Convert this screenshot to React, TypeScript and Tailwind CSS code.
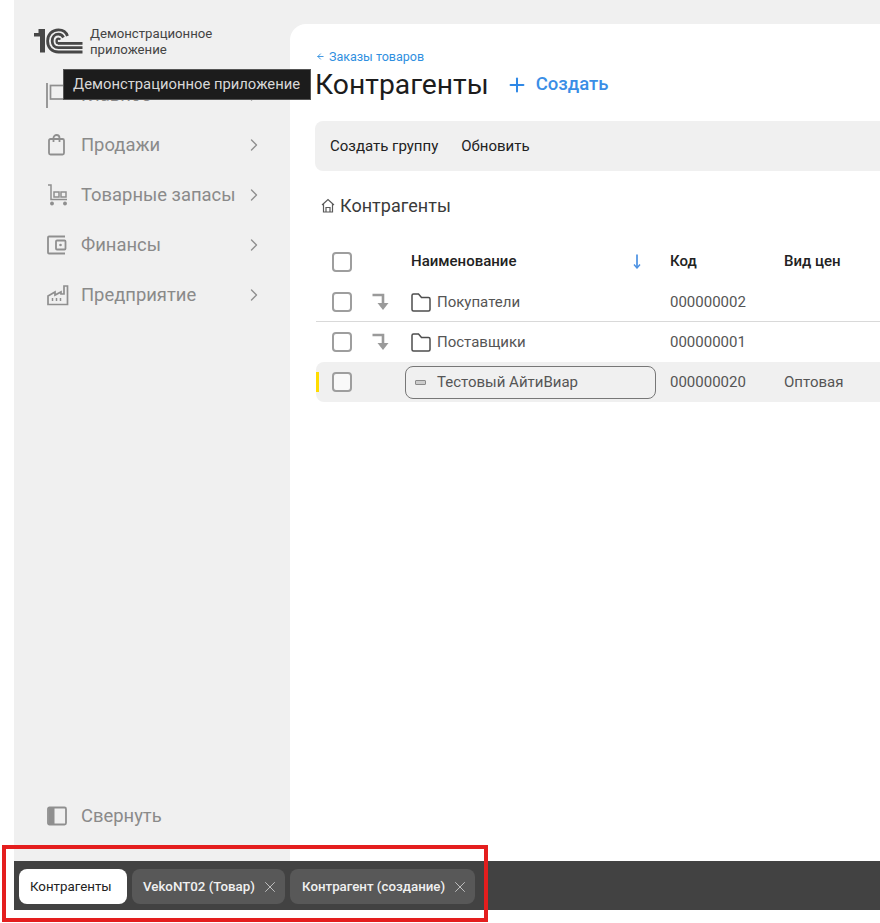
import React from "react";
import { ChevronRight, X, Plus, ArrowLeft } from "lucide-react";

function Logo() {
  return (
    <svg width="49" height="26" viewBox="0 0 49 26" fill="none" className="shrink-0">
      <path d="M0 5 L4.5 5 L4.5 1 L11 1 L11 24.5 L6 24.5 L6 8.5 L0 8.5 Z" fill="#474747" />
      <path d="M33.5 8 C32 3.5 28 1.8 24.5 1.8 C18 1.8 13.6 6.5 13.6 13 C13.6 19.8 18 24 24.5 24 L48.5 24" stroke="#474747" strokeWidth="2.8" />
      <path d="M29.5 9.5 C28.5 7.5 26.5 6.2 24.5 6.2 C20.6 6.2 18.2 9.2 18.2 13 C18.2 16.8 20.6 19.7 24.5 19.7 L48.5 19.7" stroke="#474747" strokeWidth="2.8" />
      <path d="M24 15.4 L48.5 15.4" stroke="#474747" strokeWidth="2.8" />
      <path d="M24.5 15.4 C23.4 15.4 22.6 14.4 22.6 13 C22.6 11.6 23.4 10.6 24.5 10.6 C25.2 10.6 25.8 11 26.2 11.6" stroke="#474747" strokeWidth="2.4" />
    </svg>
  );
}

function HomeIcon() {
  return (
    <svg width="20" height="24" viewBox="0 0 20 24" fill="none" stroke="#8f8f8f" strokeWidth="1.7">
      <rect x="3.5" y="2.5" width="15" height="13.5" />
    </svg>
  );
}
function BagIcon() {
  return (
    <svg width="20" height="22" viewBox="0 0 20 22" fill="none" stroke="#8f8f8f" strokeWidth="1.8">
      <rect x="2" y="5" width="15" height="15.5" rx="1.5" />
      <path d="M6.5 8 V4 C6.5 2.2 8 1 9.5 1 C11 1 12.5 2.2 12.5 4 V8" />
    </svg>
  );
}
function CartIcon() {
  return (
    <svg width="22" height="22" viewBox="0 0 22 22" fill="none" stroke="#8f8f8f" strokeWidth="1.5">
      <path d="M1 1 H4 V15.5 H20" />
      <rect x="7" y="8" width="5" height="5" />
      <rect x="14" y="8" width="5" height="5" />
      <circle cx="5" cy="19.5" r="1.2" fill="#8f8f8f" />
      <circle cx="18" cy="19.5" r="1.2" fill="#8f8f8f" />
    </svg>
  );
}
function WalletIcon() {
  return (
    <svg width="20" height="20" viewBox="0 0 20 20" fill="none" stroke="#8f8f8f" strokeWidth="1.8">
      <path d="M18 1.5 H2 C1.4 1.5 1 2 1 2.5 V17.5 C1 18 1.4 18.5 2 18.5 H18" />
      <rect x="9" y="5.5" width="9.5" height="9" rx="1" />
      <circle cx="13.5" cy="10" r="1.3" fill="#8f8f8f" stroke="none" />
    </svg>
  );
}
function FactoryIcon() {
  return (
    <svg width="22" height="22" viewBox="0 0 22 22" fill="none" stroke="#8f8f8f" strokeWidth="1.7">
      <path d="M1 20.5 V12 L8 8 V11 L14 8 V10 H17 V2 H20.5 V20.5 Z" />
      <path d="M5.5 14 V17 M9.5 14 V17 M13.5 14 V17" strokeWidth="1.5" />
    </svg>
  );
}
function PanelIcon() {
  return (
    <svg width="20" height="20" viewBox="0 0 20 20" fill="none">
      <rect x="1" y="1.5" width="18" height="17" rx="1.5" stroke="#8f8f8f" strokeWidth="1.8" />
      <path d="M1.5 2 H7.5 V18 H1.5 Z" fill="#8f8f8f" />
    </svg>
  );
}
function HouseSmall() {
  return (
    <svg width="14" height="15" viewBox="0 0 14 15" fill="none" stroke="#5a5a5a" strokeWidth="1.2">
      <path d="M1 7 L7 1.5 L13 7" />
      <path d="M2.5 6 V14 H11.5 V6" />
      <path d="M5 14 V9.5 H9 V14" />
    </svg>
  );
}
function Folder() {
  return (
    <svg width="20" height="19" viewBox="0 0 20 19" fill="none" stroke="#4d4d4d" strokeWidth="1.5" className="shrink-0">
      <path d="M1 2.5 C1 1.5 1.5 1 2.5 1 H7.5 L10.5 4.5 H17.5 C18.5 4.5 19 5 19 6 V16.5 C19 17.5 18.5 18 17.5 18 H2.5 C1.5 18 1 17.5 1 16.5 Z" />
    </svg>
  );
}
function TurnArrow() {
  return (
    <svg width="18" height="18" viewBox="0 0 18 18" fill="none" className="shrink-0">
      <path d="M0.5 2 H11 V11" stroke="#9a9a9a" strokeWidth="2.6" />
      <path d="M5.5 10 H16.5 L11 17 Z" fill="#9a9a9a" />
    </svg>
  );
}
function SortArrow() {
  return (
    <svg width="10" height="15" viewBox="0 0 10 15" fill="none" className="shrink-0">
      <path d="M5 0.5 V13" stroke="#4a90e2" strokeWidth="1.7" />
      <path d="M2 10.5 L5 14 L8 10.5" stroke="#4a90e2" strokeWidth="1.4" />
    </svg>
  );
}
function Check() {
  return <div className="w-5 h-5 shrink-0 rounded-[4px] border-2 border-[#9e9e9e] bg-white/60" />;
}

const nav = [
  { label: "Главное", icon: <HomeIcon /> },
  { label: "Продажи", icon: <BagIcon /> },
  { label: "Товарные запасы", icon: <CartIcon /> },
  { label: "Финансы", icon: <WalletIcon /> },
  { label: "Предприятие", icon: <FactoryIcon /> },
];

function Row({ cb, arrow, name, code, price, className = "h-10" }: { cb?: React.ReactNode; arrow?: React.ReactNode; name: React.ReactNode; code: React.ReactNode; price?: React.ReactNode; className?: string }) {
  return (
    <div className={`flex items-center pl-4 ${className}`}>
      <div className="w-10 shrink-0">{cb}</div>
      <div className="w-[33px] shrink-0">{arrow}</div>
      <div className="w-[265px] shrink-0 pr-[14px]">{name}</div>
      <div className="w-[114px] shrink-0">{code}</div>
      <div>{price}</div>
    </div>
  );
}

export default function App() {
  return (
    <div className="relative w-[880px] h-[923px] overflow-hidden bg-white pl-[14px] pb-[13px] flex flex-col" style={{ fontFamily: 'Roboto, "Noto Sans", sans-serif' }}>
      <div className="flex flex-1 min-h-0 bg-[#f0f0f0]">
        <aside className="w-[276px] shrink-0 flex flex-col pt-[28px]">
          <div className="flex items-center pl-5 h-[26px]">
            <Logo />
            <div className="ml-[7px] text-[13.2px] leading-[16px] text-[#444] mt-px">
              Демонстрационное<br />приложение
            </div>
          </div>
          <nav className="mt-[16px]">
            {nav.map((n) => (
              <div key={n.label} className="h-[50px] flex items-center pl-[33px] pr-[26px] text-[#8a8a8a] text-[18.4px]">
                <div className="w-[34px] shrink-0 flex items-center">{n.icon}</div>
                <span className="flex-1 whitespace-nowrap">{n.label}</span>
                <ChevronRight size={20} strokeWidth={1.6} color="#8f8f8f" />
              </div>
            ))}
          </nav>
          <div className="mt-auto mb-[25px] h-10 flex items-center pl-[33px] text-[#8a8a8a] text-[18.4px]">
            <div className="w-[34px] shrink-0"><PanelIcon /></div>
            <span>Свернуть</span>
          </div>
        </aside>
        <main className="flex-1 mt-6 bg-white rounded-tl-[16px] min-w-0 pl-[25px] pt-[25px]">
          <div className="flex items-center gap-[3px] pl-[1px] text-[12.5px] leading-[15px] text-[#2f8fe0]">
            <ArrowLeft size={9} strokeWidth={2.4} />
            <span className="ml-[1px]">Заказы товаров</span>
          </div>
          <div className="flex items-center mt-[3px] h-[36px]">
            <h1 className="text-[28.3px] leading-[36px] text-[#1c1c1c]">Контрагенты</h1>
            <Plus size={22} strokeWidth={2.2} color="#2f88e6" className="ml-[17px]" />
            <span className="ml-[8px] text-[18.5px] font-medium text-[#3a8ee6]">Создать</span>
          </div>
          <div className="mt-[18px] h-[50px] flex items-center gap-[23px] pl-[15px] rounded-l-lg bg-[#f0f0f0] text-[#222] text-[15px]">
            <span>Создать группу</span>
            <span>Обновить</span>
          </div>
          <div className="mt-[22px] h-6 flex items-center pl-[6px] gap-[5px] text-[18px] text-[#3a3a3a] tracking-[0.05px]">
            <HouseSmall />
            <span>Контрагенты</span>
          </div>
          <div className="mt-[24px] pl-[1px] text-[15px] text-[#555]">
            <Row
              className="h-[41px] font-medium text-[#222]"
              cb={<Check />}
              name={
                <div className="flex items-center pl-[6px] justify-between pr-[14px]">
                  <span>Наименование</span>
                  <SortArrow />
                </div>
              }
              code="Код"
              price="Вид цен"
            />
            <Row
              className="h-10 pt-px border-b border-[#d9d9d9]"
              cb={<Check />}
              arrow={<TurnArrow />}
              name={<div className="flex items-center gap-[6px] pl-[6px]"><Folder /><span>Покупатели</span></div>}
              code="000000002"
            />
            <Row
              cb={<Check />}
              arrow={<TurnArrow />}
              name={<div className="flex items-center gap-[6px] pl-[6px]"><Folder /><span>Поставщики</span></div>}
              code="000000001"
            />
            <div className="relative">
              <div className="absolute left-0 top-[10px] w-[3px] h-5 bg-[#ffdc00]" />
              <Row
                className="h-10 bg-[#f0f0f0] rounded-l-lg"
                cb={<Check />}
                name={
                  <div className="flex items-center h-[33px] border border-[#777] rounded-lg pl-[9px]">
                    <span className="w-[11px] h-[5px] rounded-[1px] border-[1.5px] border-[#8a8a8a] bg-[#ccc] shrink-0" />
                    <span className="ml-[11px]">Тестовый АйтиВиар</span>
                  </div>
                }
                code="000000020"
                price="Оптовая"
              />
            </div>
          </div>
        </main>
      </div>
      <footer className="h-[49px] shrink-0 bg-[#424242] flex items-center gap-[5px] pl-[5px] text-[13.3px] font-medium">
        <div className="h-[35px] w-[108px] rounded-lg bg-white text-[#222] font-normal flex items-center pl-[11px] pt-px mt-px">Контрагенты</div>
        <div className="h-[35px] w-[153px] rounded-lg bg-[#585858] text-[#f0f0f0] flex items-center pl-[11px] pt-px mt-px">
          <span className="flex-1 whitespace-nowrap">VekoNT02 (Товар)</span>
          <X size={18} strokeWidth={1.2} color="#c8c8c8" className="mr-[6px]" />
        </div>
        <div className="h-[35px] w-[185px] rounded-lg bg-[#585858] text-[#f0f0f0] flex items-center pl-[12px] pt-px mt-px">
          <span className="flex-1 whitespace-nowrap">Контрагент (создание)</span>
          <X size={18} strokeWidth={1.2} color="#c8c8c8" className="mr-[6px]" />
        </div>
      </footer>

      <div className="absolute left-[63px] top-[69px] h-[31px] w-[248px] bg-[#1c1c1c] border border-[#555] text-[#d8d8d8] text-[14.8px] flex items-center pl-[9px] whitespace-nowrap">
        Демонстрационное приложение
      </div>
      <div className="absolute left-[46px] top-[83px] w-[2px] h-[25px] bg-[#999]" />
      <div className="absolute left-[2px] top-[845px] w-[486px] h-[77px] border-[4px] border-[#e41e1e]" />
    </div>
  );
}
